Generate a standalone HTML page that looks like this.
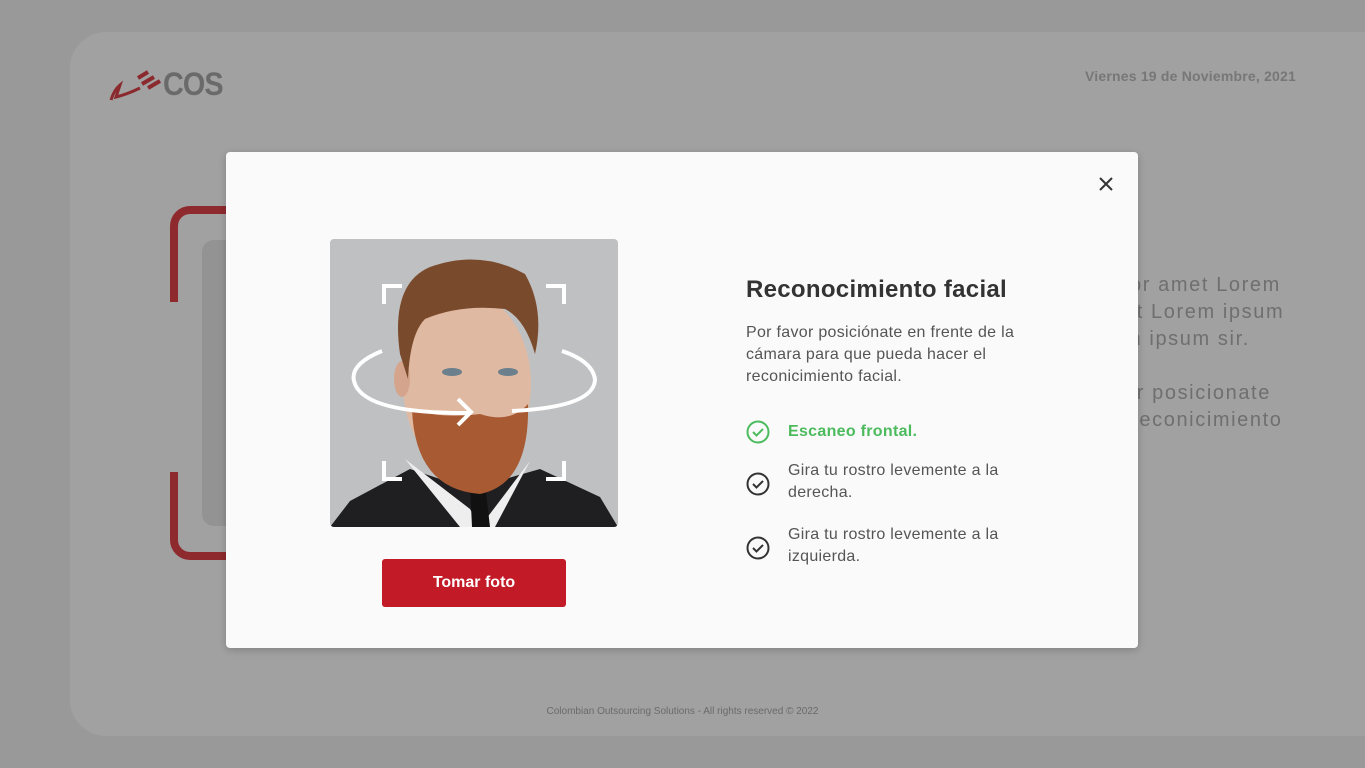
<html><head><style>
body{margin:0;width:1365px;height:768px;background:#999;font-family:"Liberation Sans",sans-serif;position:relative;overflow:hidden}
.card{position:absolute;left:70px;top:32px;width:1295px;height:704px;background:#a1a1a1;border-radius:36px 0 0 36px}
.abs{position:absolute}
.modal{position:absolute;left:226px;top:152px;width:912px;height:496px;background:#fafafa;border-radius:4px;box-shadow:0 2px 8px rgba(0,0,0,.2)}
.bgtxt{color:#6f6f6f;font-size:20px;line-height:27px;letter-spacing:1.6px}
.item{position:absolute;left:520px;font-size:16px;line-height:22px;color:#555;letter-spacing:.3px}
</style></head><body>
<div class="card"></div>
<svg class="abs" style="left:108px;top:70px" width="60" height="34"><path d="M3 30 Q6 20 12 15 L8 27 Q20 24 32 18" stroke="#8b2a2e" stroke-width="3" fill="none"/><path d="M30 8l10-6M34 14l12-7M40 18l12-7" stroke="#8b2a2e" stroke-width="4"/></svg>
<div class="abs" style="left:163px;top:66px;font-size:32px;font-weight:bold;color:#6a6a6a;letter-spacing:-1px;transform:scaleX(.9);transform-origin:left">COS</div>
<div class="abs" style="left:1085px;top:68px;font-size:14px;color:#777;font-weight:bold;letter-spacing:.2px">Viernes 19 de Noviembre, 2021</div>
<div class="abs" style="left:170px;top:206px;width:60px;height:88px;border:8px solid #8e2a2e;border-right:none;border-bottom:none;border-radius:20px 0 0 0"></div>
<div class="abs" style="left:170px;top:472px;width:60px;height:80px;border:8px solid #8e2a2e;border-right:none;border-top:none;border-radius:0 0 0 20px"></div>
<div class="abs" style="left:202px;top:240px;width:40px;height:286px;background:#939393;border-radius:12px"></div>
<div class="abs bgtxt" style="left:1124px;top:272px;white-space:nowrap">lor amet Lorem<br>et Lorem ipsum<br>m ipsum sir.</div>
<div class="abs bgtxt" style="left:1124px;top:380px;white-space:nowrap">or posicionate<br>&nbsp;reconicimiento</div>
<div class="abs" style="left:0;width:1365px;top:706px;text-align:center;font-size:10px;color:#6a6a6a">Colombian Outsourcing Solutions - All rights reserved © 2022</div>
<div class="modal">
<svg class="abs" style="left:872px;top:24px" width="16" height="16"><path d="M2 2L14 14M14 2L2 14" stroke="#333" stroke-width="2"/></svg>
<svg class="abs" style="left:104px;top:87px;border-radius:4px" width="288" height="288" viewBox="0 0 288 288">
<rect width="288" height="288" fill="#bfc0c1"/>
<path d="M0 288 L20 262 L80 230 L140 250 L210 230 L270 258 L288 288Z" fill="#1f1f21"/>
<path d="M75 220 L140 270 L150 288 L130 288Z M200 222 L150 288 L165 288Z" fill="#eee"/>
<path d="M140 245 L155 245 L160 288 L142 288Z" fill="#111"/>
<ellipse cx="137" cy="145" rx="64" ry="90" fill="#e0b9a2"/>
<ellipse cx="72" cy="140" rx="8" ry="18" fill="#d4a58c"/>
<path d="M82 170 Q85 250 150 255 Q200 245 198 165 Q180 185 150 175 Q110 180 82 170Z" fill="#a85a32"/>
<path d="M70 115 Q60 45 100 28 Q150 10 195 35 Q215 70 205 115 Q195 80 175 70 Q130 65 95 80 Q80 95 78 140Z" fill="#7a4a2c"/>
<ellipse cx="122" cy="133" rx="10" ry="4" fill="#6b7f8c"/><ellipse cx="178" cy="133" rx="10" ry="4" fill="#6b7f8c"/>
<g stroke="#fff" stroke-width="4" fill="none"><path d="M54 65V47h18M216 47h18v18M54 222v18h18M234 222v18h-18"/>
<path d="M52 112 Q20 125 24 142 Q32 175 140 174M182 172 Q265 168 265 140 Q262 122 232 112"/><path d="M128 160l13 13-13 13"/></g>
</svg>
<div class="abs" style="left:156px;top:407px;width:184px;height:48px;background:#c21a26;border-radius:3px;color:#fff;font-weight:bold;font-size:16px;line-height:48px;text-align:center">Tomar foto</div>
<div class="abs" style="left:520px;top:124px;font-size:24px;font-weight:bold;color:#333;letter-spacing:.3px">Reconocimiento facial</div>
<div class="item" style="top:170px;width:300px">Por favor posiciónate en frente de la cámara para que pueda hacer el reconicimiento facial.</div>
<svg class="abs" style="left:520px;top:268px" width="24" height="24"><circle cx="12" cy="12" r="10.5" stroke="#4cbb5e" stroke-width="2" fill="none"/><path d="M7 12l3.5 3.5L17 9" stroke="#4cbb5e" stroke-width="2" fill="none"/></svg>
<div class="item" style="left:562px;top:269px;color:#4cbb5e;font-weight:bold">Escaneo frontal.</div>
<svg class="abs" style="left:520px;top:320px" width="24" height="24"><circle cx="12" cy="12" r="10.5" stroke="#333" stroke-width="2" fill="none"/><path d="M7 12l3.5 3.5L17 9" stroke="#333" stroke-width="2" fill="none"/></svg>
<div class="item" style="left:562px;top:308px;width:240px">Gira tu rostro levemente a la derecha.</div>
<svg class="abs" style="left:520px;top:384px" width="24" height="24"><circle cx="12" cy="12" r="10.5" stroke="#333" stroke-width="2" fill="none"/><path d="M7 12l3.5 3.5L17 9" stroke="#333" stroke-width="2" fill="none"/></svg>
<div class="item" style="left:562px;top:372px;width:240px">Gira tu rostro levemente a la izquierda.</div>
</div>
</body></html>
